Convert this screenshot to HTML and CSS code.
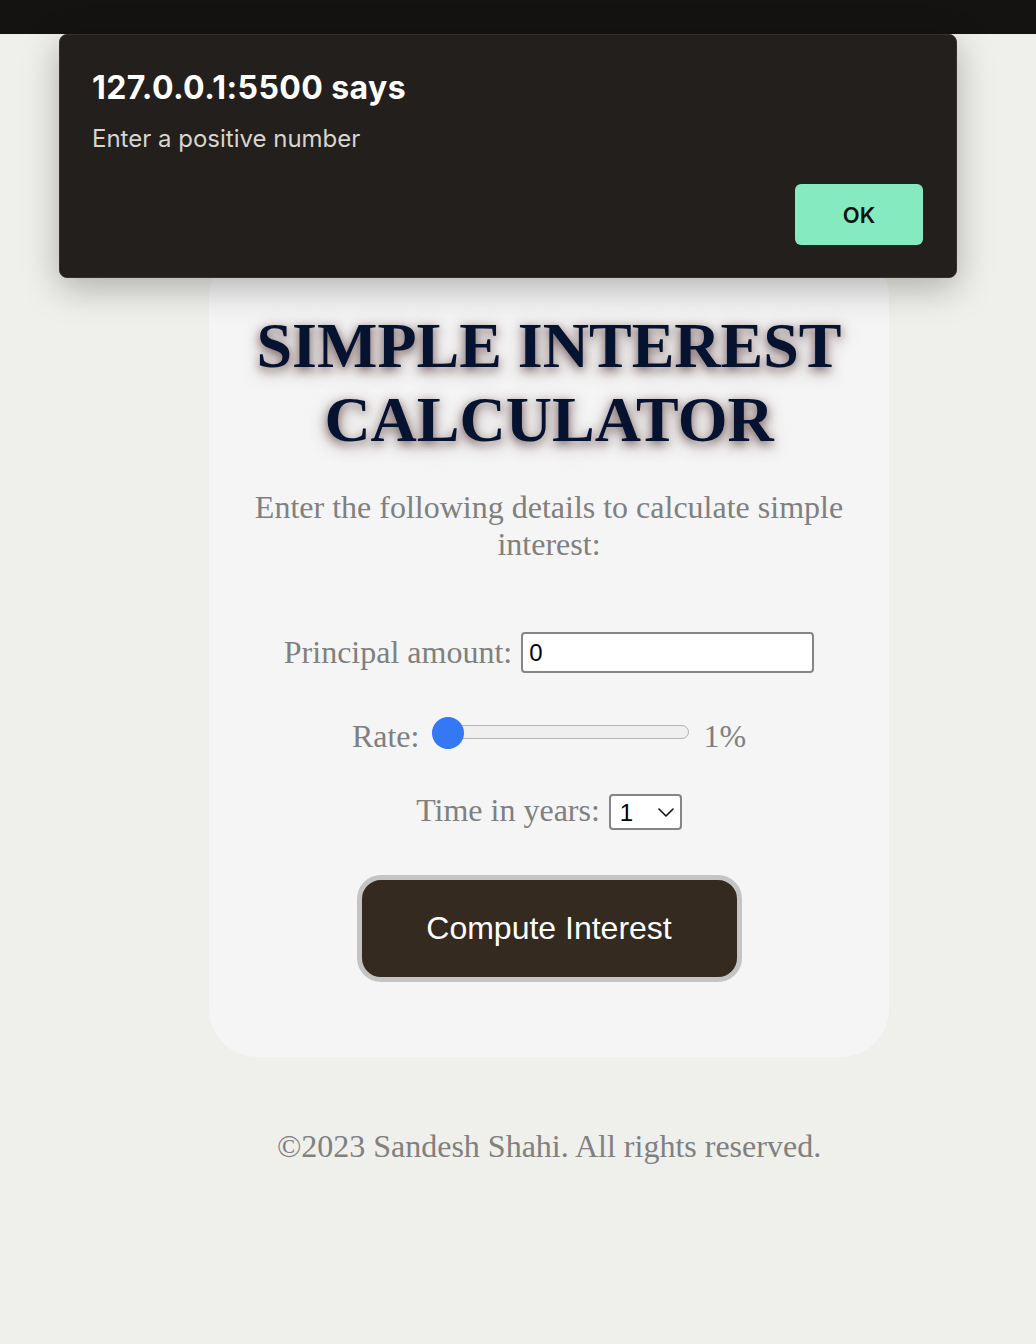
FILE: index.html
```html
<!DOCTYPE html>
<html lang="en">
<head>
<meta charset="utf-8">
<title>Simple Interest Calculator</title>
<link rel="stylesheet" href="styles.css">
</head>
<body>
<div class="topbar"></div>
<main class="page">
  <section class="card">
    <h1 class="title">SIMPLE INTEREST CALCULATOR</h1>
    <p class="subtitle">Enter the following details to calculate simple interest:</p>
    <form class="form">
      <div class="row row-principal">
        <label class="label" for="principal">Principal amount:</label>
        <input class="text-input" id="principal" type="number" value="0">
      </div>
      <div class="row row-rate">
        <label class="label" for="rate">Rate:</label>
        <input class="rate" id="rate" type="range" min="1" max="20" value="1">
        <span class="label">1%</span>
      </div>
      <div class="row row-time">
        <label class="label" for="time">Time in years:</label>
        <span class="select-wrap">
          <select class="select" id="time">
            <option>1</option>
            <option>2</option>
            <option>3</option>
          </select>
          <svg class="chevron" width="16" height="9" viewBox="0 0 16 9"><path d="M1 1l7 7 7-7" fill="none" stroke="#111" stroke-width="1.6" stroke-linecap="round" stroke-linejoin="round"/></svg>
        </span>
      </div>
      <button class="compute" type="button">Compute Interest</button>
    </form>
  </section>
  <footer class="footer">©2023 Sandesh Shahi. All rights reserved.</footer>
</main>
<div class="dialog">
  <div class="dialog-title">127.0.0.1:5500 says</div>
  <div class="dialog-msg">Enter a positive number</div>
  <div class="dialog-actions"><button class="ok" type="button">OK</button></div>
</div>
</body>
</html>
```
FILE: styles.css
```css
html, body {
  margin: 0;
  padding: 0;
}
body {
  background: #efefeb;
  min-height: 1344px;
  font-family: "Liberation Serif", "Times New Roman", serif;
  position: relative;
}
.topbar {
  height: 34px;
  background: #141311;
}
.page {
  padding-left: 62px;
  display: flex;
  flex-direction: column;
  align-items: center;
}
.card {
  margin-top: 216px;
  width: 680px;
  box-sizing: border-box;
  padding: 59px 0 75px;
  background: #f5f5f5;
  border-radius: 48px;
  text-align: center;
}
.title {
  margin: 0;
  font-family: "Liberation Serif", "Times New Roman", serif;
  font-weight: 700;
  font-size: 64px;
  line-height: 74px;
  color: #061330;
  text-shadow: 0 3px 10px rgba(95, 65, 65, 0.75), 0 5px 18px rgba(95, 65, 65, 0.45);
}
.subtitle {
  margin: 32px 0 0;
  font-size: 32px;
  line-height: 37px;
  color: #808080;
}
.form {
  margin-top: 69px;
  display: flex;
  flex-direction: column;
  align-items: center;
}
.row {
  display: flex;
  justify-content: center;
}
.label {
  font-family: "Liberation Serif", "Times New Roman", serif;
  font-size: 32px;
  line-height: 37px;
  color: #808080;
}
.row-principal {
  align-items: center;
  gap: 9px;
}
.text-input {
  width: 293px;
  height: 41px;
  box-sizing: border-box;
  border: 2px solid #858585;
  border-radius: 4px;
  background: #fff;
  padding: 0 6px;
  font-family: "Liberation Sans", Arial, sans-serif;
  font-size: 24px;
  color: #000;
  -moz-appearance: textfield;
  outline: none;
}
.text-input::-webkit-inner-spin-button,
.text-input::-webkit-outer-spin-button {
  -webkit-appearance: none;
  margin: 0;
}
.row-rate {
  margin-top: 43px;
  align-items: flex-end;
}
.row-rate .label:first-child {
  margin-right: 13px;
}
.row-rate .label:last-child {
  margin-left: 14px;
}
.rate {
  -webkit-appearance: none;
  appearance: none;
  width: 257px;
  height: 32px;
  margin: 0 0 7px;
  padding: 0;
  background: transparent;
}
.rate::-webkit-slider-runnable-track {
  height: 14px;
  background: #efefef;
  border: 1px solid #b3b3b3;
  border-radius: 8px;
}
.rate::-webkit-slider-thumb {
  -webkit-appearance: none;
  appearance: none;
  width: 32px;
  height: 32px;
  margin-top: -9px;
  margin-left: -1px;
  border: none;
  border-radius: 50%;
  background: #3478f6;
}
.row-time {
  margin-top: 37px;
  align-items: flex-end;
  gap: 9px;
}
.select-wrap {
  position: relative;
  display: block;
  height: 35px;
}
.select {
  -webkit-appearance: none;
  appearance: none;
  width: 73px;
  height: 36px;
  box-sizing: border-box;
  border: 2px solid #858585;
  border-radius: 4px;
  background: #fff;
  padding: 0 0 0 9px;
  font-family: "Liberation Sans", Arial, sans-serif;
  font-size: 24px;
  color: #000;
  outline: none;
}
.chevron {
  position: absolute;
  left: 49px;
  top: 14px;
  pointer-events: none;
}
.compute {
  margin-top: 46px;
  width: 385px;
  height: 107px;
  box-sizing: border-box;
  border: 5px solid #c4c4c4;
  border-radius: 24px;
  background: #342a1f;
  color: #fff;
  font-family: "Liberation Sans", Arial, sans-serif;
  font-size: 32px;
  padding: 0;
  cursor: pointer;
}
.footer {
  margin-top: 71px;
  font-size: 32px;
  line-height: 37px;
  color: #808080;
  text-align: center;
}
.dialog {
  position: absolute;
  top: 34px;
  left: 59px;
  width: 898px;
  height: 244px;
  box-sizing: border-box;
  padding: 34px 33px 0 32px;
  background: #221f1c;
  border: 1px solid #34302c;
  border-radius: 8px;
  box-shadow: 0 10px 36px rgba(0, 0, 0, 0.28);
  font-family: Inter, "Noto Sans", sans-serif;
}
.dialog-title {
  font-size: 32px;
  line-height: 38px;
  font-weight: 700;
  letter-spacing: 0.4px;
  color: #fff;
}
.dialog-msg {
  margin-top: 17px;
  font-size: 24px;
  line-height: 29px;
  color: #d8d4cf;
}
.dialog-actions {
  margin-top: 31px;
  display: flex;
  justify-content: flex-end;
}
.ok {
  width: 128px;
  height: 61px;
  border: none;
  border-radius: 6px;
  background: #86eac0;
  color: #111;
  font-family: Inter, "Noto Sans", sans-serif;
  font-size: 22px;
  font-weight: 600;
  padding: 0;
}
```
